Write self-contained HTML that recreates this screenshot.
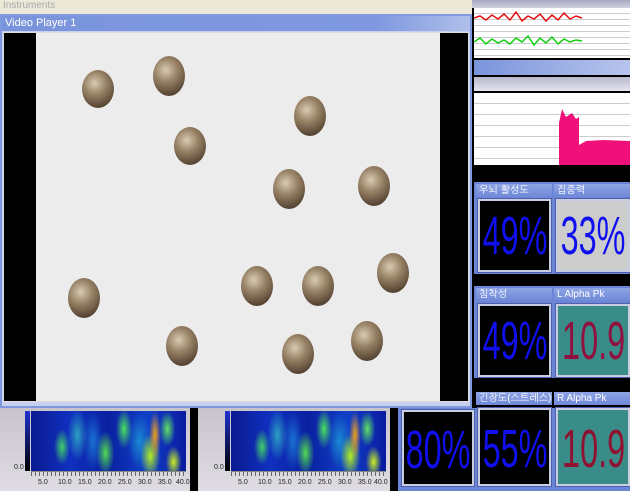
<!DOCTYPE html><html><head><meta charset="utf-8"><style>
body{margin:0;width:630px;height:491px;overflow:hidden;background:#000;font-family:"Liberation Sans","NanumGothic",sans-serif;position:relative}
div{position:absolute;box-sizing:border-box}
.b{border-radius:50%;background:radial-gradient(circle at 40% 35%,#d8ccb4 0%,#9a8468 35%,#5a4836 75%,#3a2e22 100%)}
.lbl{height:13px;background:linear-gradient(#8ea4e4,#6f88d8);color:#fff;font-size:10px;line-height:13px;padding-left:3px;white-space:nowrap;overflow:hidden}
.box{border:2px solid #c9cde0;outline:1px solid #5060b0;color:#1010ee;font-size:54px;line-height:70px;overflow:hidden;white-space:nowrap}
.box span{position:absolute;top:0;left:50%;transform:translateX(-50%) scaleX(0.6)}
.box span.r{left:auto;right:3px;transform:scaleX(0.6);transform-origin:right center}
.pan{background:#6c84d4}
.spec{background:radial-gradient(ellipse 8px 18px at 20% 60%,#3fd06a,transparent),radial-gradient(ellipse 10px 26px at 30% 40%,#2aa0c0,transparent),radial-gradient(ellipse 9px 22px at 48% 70%,#4fdc50,transparent),radial-gradient(ellipse 8px 20px at 60% 30%,#4ce060,transparent),radial-gradient(ellipse 6px 24px at 80% 40%,#f0a020,transparent),radial-gradient(ellipse 10px 22px at 77% 75%,#b0f020,transparent),radial-gradient(ellipse 8px 18px at 88% 30%,#5ce060,transparent),radial-gradient(ellipse 8px 16px at 92% 85%,#c8f020,transparent),radial-gradient(ellipse 12px 28px at 70% 50%,#1a8ad0,transparent),radial-gradient(ellipse 10px 30px at 40% 50%,#1a70d0,transparent),linear-gradient(90deg,#0a1a90,#1030c0,#0a20a0,#1040c8,#0a1aa0)}
.ax{font-size:7px;color:#222;top:71px}
</style></head><body>
<div style="left:0;top:0;width:472px;height:14px;background:#ece9d8;color:#aaa;font-size:10px;padding-left:3px;line-height:12px">Instruments</div>
<div style="left:0;top:14px;width:472px;height:394px;background:#c8d0f0;border:2px solid #7f98e0"></div>
<div style="left:2px;top:16px;width:468px;height:15px;background:linear-gradient(90deg,#7a94dc,#7f98e0 80%,#b0c0ea);color:#fff;font-size:11px;line-height:15px;padding-left:3px">Video Player 1</div>
<div style="left:3px;top:32px;width:466px;height:370px;background:#000;border:1px solid #ddd"></div>
<div style="left:36px;top:33px;width:404px;height:368px;background:#ececec"></div>
<div class="b" style="left:82px;top:70px;width:32px;height:38px"></div>
<div class="b" style="left:153px;top:56px;width:32px;height:40px"></div>
<div class="b" style="left:294px;top:96px;width:32px;height:40px"></div>
<div class="b" style="left:174px;top:127px;width:32px;height:38px"></div>
<div class="b" style="left:273px;top:169px;width:32px;height:40px"></div>
<div class="b" style="left:358px;top:166px;width:32px;height:40px"></div>
<div class="b" style="left:377px;top:253px;width:32px;height:40px"></div>
<div class="b" style="left:68px;top:278px;width:32px;height:40px"></div>
<div class="b" style="left:241px;top:266px;width:32px;height:40px"></div>
<div class="b" style="left:302px;top:266px;width:32px;height:40px"></div>
<div class="b" style="left:166px;top:326px;width:32px;height:40px"></div>
<div class="b" style="left:282px;top:334px;width:32px;height:40px"></div>
<div class="b" style="left:351px;top:321px;width:32px;height:40px"></div>
<div style="left:472px;top:0;width:158px;height:8px;background:linear-gradient(#a8a8c0,#d0d0e0)"></div>
<div style="left:474px;top:8px;width:156px;height:50px;background:#fff;background-image:repeating-linear-gradient(#fff 0 5px,#ccc 5px 6px)"></div>
<svg style="position:absolute;left:474px;top:8px" width="156" height="50"><polyline fill="none" stroke="#e01010" stroke-width="1.5" points="0,10 6,8 12,12 18,7 24,11 30,6 36,12 42,4 48,13 54,8 60,11 66,6 72,13 78,7 84,12 90,5 96,11 102,8 108,10"/><polyline fill="none" stroke="#10d010" stroke-width="1.5" points="0,34 6,30 12,36 18,31 24,35 30,32 36,36 42,30 48,34 54,28 60,37 66,30 72,35 78,29 84,36 90,31 96,34 102,32 108,33"/></svg>
<div style="left:474px;top:60px;width:156px;height:15px;background:linear-gradient(90deg,#7a94dc,#b8c4ec)"></div>
<div style="left:474px;top:77px;width:156px;height:14px;background:linear-gradient(#b8b8cc,#e4e4ee)"></div>
<div style="left:474px;top:93px;width:156px;height:72px;background:repeating-linear-gradient(#fff 0 10px,#ccc 10px 11px)"></div>
<svg style="position:absolute;left:474px;top:93px" width="156" height="72"><polygon fill="#f0107a" points="85,72 85,30 88,16 92,24 98,20 102,26 105,24 105,52 112,48 130,47 156,48 156,72"/></svg>
<div style="left:474px;top:182px;width:156px;height:92px" class="pan"></div>
<div class="lbl" style="left:476px;top:184px;width:76px">우뇌 활성도</div>
<div class="lbl" style="left:554px;top:184px;width:76px">집중력</div>
<div class="box" style="left:478px;top:199px;width:73px;height:73px;background:#000"><span>49%</span></div>
<div class="box" style="left:556px;top:199px;width:74px;height:73px;background:#ccc"><span>33%</span></div>
<div style="left:474px;top:286px;width:156px;height:92px" class="pan"></div>
<div class="lbl" style="left:476px;top:288px;width:76px">침착성</div>
<div class="lbl" style="left:554px;top:288px;width:76px">L Alpha Pk</div>
<div class="box" style="left:478px;top:304px;width:73px;height:73px;background:#000"><span>49%</span></div>
<div class="box" style="left:556px;top:304px;width:74px;height:73px;background:#3a8c88;color:#901040"><span class="r">10.9</span></div>
<div style="left:398px;top:408px;width:232px;height:83px" class="pan"></div>
<div class="lbl" style="left:476px;top:392px;width:76px">긴장도(스트레스)</div>
<div class="lbl" style="left:554px;top:392px;width:76px">R Alpha Pk</div>
<div class="box" style="left:402px;top:410px;width:72px;height:76px;background:#000;line-height:76px"><span>80%</span></div>
<div class="box" style="left:478px;top:408px;width:73px;height:78px;background:#000;line-height:78px"><span>55%</span></div>
<div class="box" style="left:556px;top:408px;width:74px;height:78px;background:#3a8c88;color:#901030;line-height:78px"><span class="r">10.9</span></div>
<div style="left:0;top:408px;width:190px;height:83px;background:linear-gradient(#c8c4cc,#e0dce4)">
<div style="left:25px;top:3px;width:5px;height:60px;background:linear-gradient(#2030d0,#000)"></div>
<div class="spec" style="left:31px;top:3px;width:155px;height:60px"></div>
<div style="left:31px;top:63px;width:155px;height:5px;border-top:1px solid #888;background:repeating-linear-gradient(90deg,#666 0 1px,transparent 1px 4px)"></div>
<div class="ax" style="left:14px;top:56px">0.0</div>
<div class="ax" style="left:38px">5.0</div><div class="ax" style="left:58px">10.0</div><div class="ax" style="left:78px">15.0</div><div class="ax" style="left:98px">20.0</div><div class="ax" style="left:118px">25.0</div><div class="ax" style="left:138px">30.0</div><div class="ax" style="left:158px">35.0</div><div class="ax" style="left:176px">40.0</div>
</div>
<div style="left:198px;top:408px;width:192px;height:83px;background:linear-gradient(#c8c4cc,#e0dce4)">
<div style="left:27px;top:3px;width:5px;height:60px;background:linear-gradient(#2030d0,#000)"></div>
<div class="spec" style="left:33px;top:3px;width:155px;height:60px"></div>
<div style="left:33px;top:63px;width:155px;height:5px;border-top:1px solid #888;background:repeating-linear-gradient(90deg,#666 0 1px,transparent 1px 4px)"></div>
<div class="ax" style="left:16px;top:56px">0.0</div>
<div class="ax" style="left:40px">5.0</div><div class="ax" style="left:60px">10.0</div><div class="ax" style="left:80px">15.0</div><div class="ax" style="left:100px">20.0</div><div class="ax" style="left:120px">25.0</div><div class="ax" style="left:140px">30.0</div><div class="ax" style="left:160px">35.0</div><div class="ax" style="left:176px">40.0</div>
</div>
</body></html>
